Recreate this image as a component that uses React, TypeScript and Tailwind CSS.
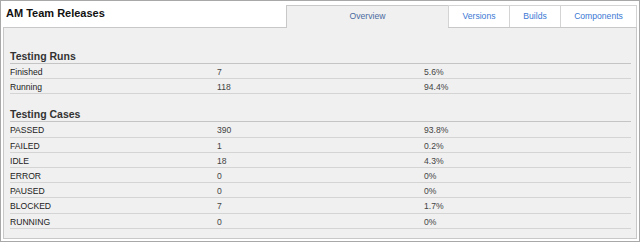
import React from "react";

const runs = [
  ["Finished", "7", "5.6%"],
  ["Running", "118", "94.4%"],
];
const cases = [
  ["PASSED", "390", "93.8%"],
  ["FAILED", "1", "0.2%"],
  ["IDLE", "18", "4.3%"],
  ["ERROR", "0", "0%"],
  ["PAUSED", "0", "0%"],
  ["BLOCKED", "7", "1.7%"],
  ["RUNNING", "0", "0%"],
];

function Section({ title, rows, className }: { title: string; rows: string[][]; className?: string }) {
  return (
    <div className={className}>
      <div className="h-[15px] leading-[15px] text-[10.5px] font-bold text-[#333] border-b border-[#c4c4c4]">
        {title}
      </div>
      {rows.map((r) => (
        <div key={r[0]} className="grid grid-cols-3 h-[15.2px] pt-[1px] border-b border-[#d4d4d4] text-[8.6px] leading-[14px] items-center">
          <div className="text-[#222]">{r[0]}</div>
          <div className="text-[#444]">{r[1]}</div>
          <div className="text-[#444]">{r[2]}</div>
        </div>
      ))}
    </div>
  );
}

export default function App() {
  return (
    <div
      className="w-[640px] h-[242px] border border-[#a8a8a8] bg-white flex flex-col"
      style={{ fontFamily: '"Liberation Sans", Arial, sans-serif' }}
    >
      <div className="h-[26px] flex mr-[2px]">
        <div className="flex-1 pl-[5px] flex items-center pb-[1px] text-[11px] font-bold text-[#111]">
          AM Team Releases
        </div>
        <div className="flex items-start pt-[4px] text-[8.6px]">
          <div className="relative z-10 w-[162px] h-[23px] bg-[#f0f0f0] border-l border-t border-[#c8c8c8] flex items-center justify-center pb-[1px] text-[#4a6a9e]">
            Overview
          </div>
          <div className="w-[61px] h-[22px] border-l border-t border-[#d4d4d4] flex items-center justify-center text-[#3a78d4]">
            Versions
          </div>
          <div className="w-[51px] h-[22px] border-l border-t border-[#d4d4d4] flex items-center justify-center text-[#3a78d4]">
            Builds
          </div>
          <div className="w-[77px] h-[22px] border-l border-t border-r border-[#d4d4d4] flex items-center justify-center text-[#3a78d4]">
            Components
          </div>
        </div>
      </div>
      <div className="flex-1 ml-[2px] mr-[2px] mb-[2px] bg-[#f0f0f0] border border-[#c8c8c8] pl-[6px] pr-[5px] pt-[21px]">
        <Section title="Testing Runs" rows={runs} />
        <Section title="Testing Cases" rows={cases} className="mt-[13px]" />
      </div>
    </div>
  );
}
